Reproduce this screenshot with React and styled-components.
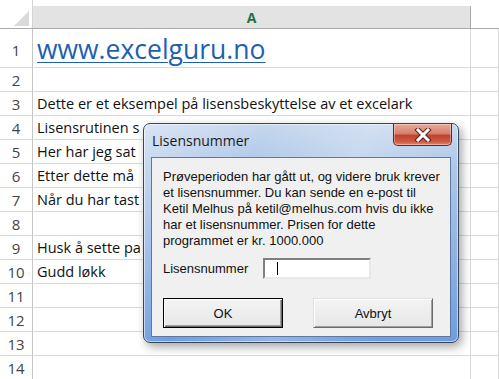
import React from "react";
import styled, { createGlobalStyle } from "styled-components";

const GlobalStyle = createGlobalStyle`
  html, body {
    margin: 0;
    padding: 0;
    background: #ffffff;
  }
  body {
    width: 499px;
    height: 379px;
    overflow: hidden;
  }
`;

// only the part of each cell that shows beside the dialog
const rows = [
  { n: 1, h: 39, link: "www.excelguru.no" },
  { n: 2 },
  { n: 3, text: "Dette er et eksempel på lisensbeskyttelse av et excelark" },
  { n: 4, text: "Lisensrutinen s" },
  { n: 5, text: "Her har jeg sat" },
  { n: 6, text: "Etter dette må" },
  { n: 7, text: "Når du har tast" },
  { n: 8 },
  { n: 9, text: "Husk å sette pa" },
  { n: 10, text: "Gudd løkk" },
  { n: 11 },
  { n: 12 },
  { n: 13 },
  { n: 14 },
];

const App = () => {
  return (
    <>
      <GlobalStyle />
      <Screen>
        <Sheet>
          <HeaderRow>
            <Corner>
              <CornerMark />
            </Corner>
            <ColHeader>A</ColHeader>
            <BlankHeader />
          </HeaderRow>
          {rows.map((r) => (
            <Row key={r.n} $h={r.h || 24}>
              <RowNum $tall={!!r.h}>{r.n}</RowNum>
              <Cell>
                {r.link ? <Link>{r.link}</Link> : r.text}
              </Cell>
              <Cell />
            </Row>
          ))}
        </Sheet>

        <Dialog>
          <TitleBar>
            <Title>Lisensnummer</Title>
            <CloseButton>
              <svg width="20" height="14" viewBox="0 0 20 14">
                <path d="M5 2 L15 12 M15 2 L5 12" stroke="#5a2018" strokeWidth="5" strokeLinecap="square" />
                <path d="M5 2 L15 12 M15 2 L5 12" stroke="#ffffff" strokeWidth="3" strokeLinecap="square" />
              </svg>
            </CloseButton>
          </TitleBar>
          <Client>
            <Message>
              Prøveperioden har gått ut, og videre bruk krever
              <br />
              et lisensnummer. Du kan sende en e-post til
              <br />
              Ketil Melhus på ketil@melhus.com hvis du ikke
              <br />
              har et lisensnummer. Prisen for dette
              <br />
              programmet er kr. 1000.000
            </Message>
            <Field>
              <Label>Lisensnummer</Label>
              <Input>
                <Caret />
              </Input>
            </Field>
            <Buttons>
              <Button $default>OK</Button>
              <Button>Avbryt</Button>
            </Buttons>
          </Client>
        </Dialog>
      </Screen>
    </>
  );
};

export default App;

const Screen = styled.div`
  position: relative;
  width: 499px;
  height: 379px;
  overflow: hidden;
  background: #ffffff;
`;

const Sheet = styled.div`
  display: flex;
  flex-direction: column;
  font-family: "Open Sans", "Noto Sans", sans-serif;
`;

const HeaderRow = styled.div`
  display: grid;
  grid-template-columns: 33px 438px 1fr;
  height: 29px;
  box-sizing: border-box;
  border-bottom: 1px solid #ababab;
`;

const Corner = styled.div`
  display: flex;
  align-items: flex-end;
  justify-content: flex-end;
  padding: 0 3px 2px 0;
  border-right: 1px solid #d4d4d4;
`;

const CornerMark = styled.div`
  width: 0;
  height: 0;
  border-left: 15px solid transparent;
  border-bottom: 15px solid #dadada;
`;

const ColHeader = styled.div`
  margin-top: 6px;
  background: #e3e3e3;
  border-right: 1px solid #ababab;
  display: flex;
  align-items: center;
  justify-content: center;
  color: #217346;
  font-weight: bold;
  font-size: 14px;
`;

const BlankHeader = styled.div``;

const Row = styled.div`
  display: grid;
  grid-template-columns: 33px 438px 1fr;
  height: ${(p) => p.$h}px;
`;

const RowNum = styled.div`
  box-sizing: border-box;
  border-right: 1px solid #c6c6c6;
  border-bottom: 1px solid #d9d9d9;
  display: flex;
  align-items: center;
  justify-content: center;
  padding-top: ${(p) => (p.$tall ? "4px" : "0")};
  color: #444444;
  font-size: 15px;
`;

const Cell = styled.div`
  box-sizing: border-box;
  border-right: 1px solid #d9d9d9;
  border-bottom: 1px solid #d9d9d9;
  display: flex;
  align-items: center;
  padding-left: 4px;
  color: #111111;
  font-size: 14.5px;
  white-space: nowrap;
  overflow: hidden;
`;

const Link = styled.span`
  color: #1f5fb0;
  font-size: 26.5px;
  text-decoration: underline;
  text-decoration-thickness: 1px;
  text-underline-offset: 3px;
  padding-top: 2px;
`;

const Dialog = styled.div`
  position: absolute;
  left: 143px;
  top: 123px;
  width: 316px;
  height: 220px;
  box-sizing: border-box;
  display: flex;
  flex-direction: column;
  padding: 0 7px 5px 7px;
  border: 1px solid #35455c;
  border-radius: 7px;
  background: linear-gradient(
      115deg,
      rgba(255, 255, 255, 0.35) 0%,
      rgba(255, 255, 255, 0) 30%,
      rgba(255, 255, 255, 0.25) 55%,
      rgba(255, 255, 255, 0) 80%
    ),
    linear-gradient(180deg, #c6d7ee 0%, #b0c8e9 18%, #8fb2e3 60%, #6e9ddf 100%);
  box-shadow: inset 0 0 0 1px rgba(255, 255, 255, 0.55),
    3px 4px 10px rgba(0, 0, 0, 0.35);
`;

const TitleBar = styled.div`
  display: flex;
  align-items: flex-start;
  justify-content: space-between;
  height: 33px;
`;

const Title = styled.div`
  padding-top: 7px;
  padding-left: 1px;
  font-family: "Open Sans", "Noto Sans", sans-serif;
  font-size: 14px;
  color: #1a1a1a;
`;

const CloseButton = styled.div`
  width: 59px;
  height: 22px;
  margin-right: -1px;
  box-sizing: border-box;
  border: 1px solid #5b2a22;
  border-top: none;
  border-radius: 0 0 5px 5px;
  background: linear-gradient(180deg, #e9a899 0%, #d6806f 45%, #c2412d 55%, #cc5e46 85%, #e08a70 100%);
  box-shadow: inset 0 0 0 1px rgba(255, 255, 255, 0.35);
  display: flex;
  align-items: center;
  justify-content: center;
`;

const Client = styled.div`
  flex: 1;
  background: #f0f0f0;
  border: 1px solid #5f78a0;
  display: flex;
  flex-direction: column;
  padding: 11px 0 0 11px;
  font-family: "Liberation Sans", Arial, sans-serif;
  font-size: 13px;
  color: #111111;
`;

const Message = styled.div`
  line-height: 16px;
  white-space: nowrap;
`;

const Field = styled.div`
  display: flex;
  align-items: center;
  margin-top: 9px;
`;

const Label = styled.div`
  width: 100px;
`;

const Input = styled.div`
  width: 108px;
  height: 21px;
  box-sizing: border-box;
  background: #ffffff;
  border: 2px solid;
  border-color: #808080 #e8e8e8 #e8e8e8 #808080;
  display: flex;
  align-items: center;
  padding-left: 12px;
`;

const Caret = styled.span`
  width: 1px;
  height: 13px;
  background: #000000;
`;

const Buttons = styled.div`
  display: flex;
  gap: 30px;
  margin-top: 19px;
`;

const Button = styled.div`
  width: 120px;
  height: 30px;
  box-sizing: border-box;
  display: flex;
  align-items: center;
  justify-content: center;
  background: linear-gradient(180deg, #f4f4f4 0%, #e6e6e6 100%);
  border: 1px solid;
  border-color: ${(p) => (p.$default ? "#000000" : "#e0e0e0 #6a6a6a #6a6a6a #e0e0e0")};
  box-shadow: ${(p) =>
    p.$default
      ? "inset 1px 1px 0 #ffffff, inset -1px -1px 0 #6a6a6a, inset -2px -2px 0 #a0a0a0"
      : "inset 1px 1px 0 #ffffff, inset -1px -1px 0 #a0a0a0"};
`;
